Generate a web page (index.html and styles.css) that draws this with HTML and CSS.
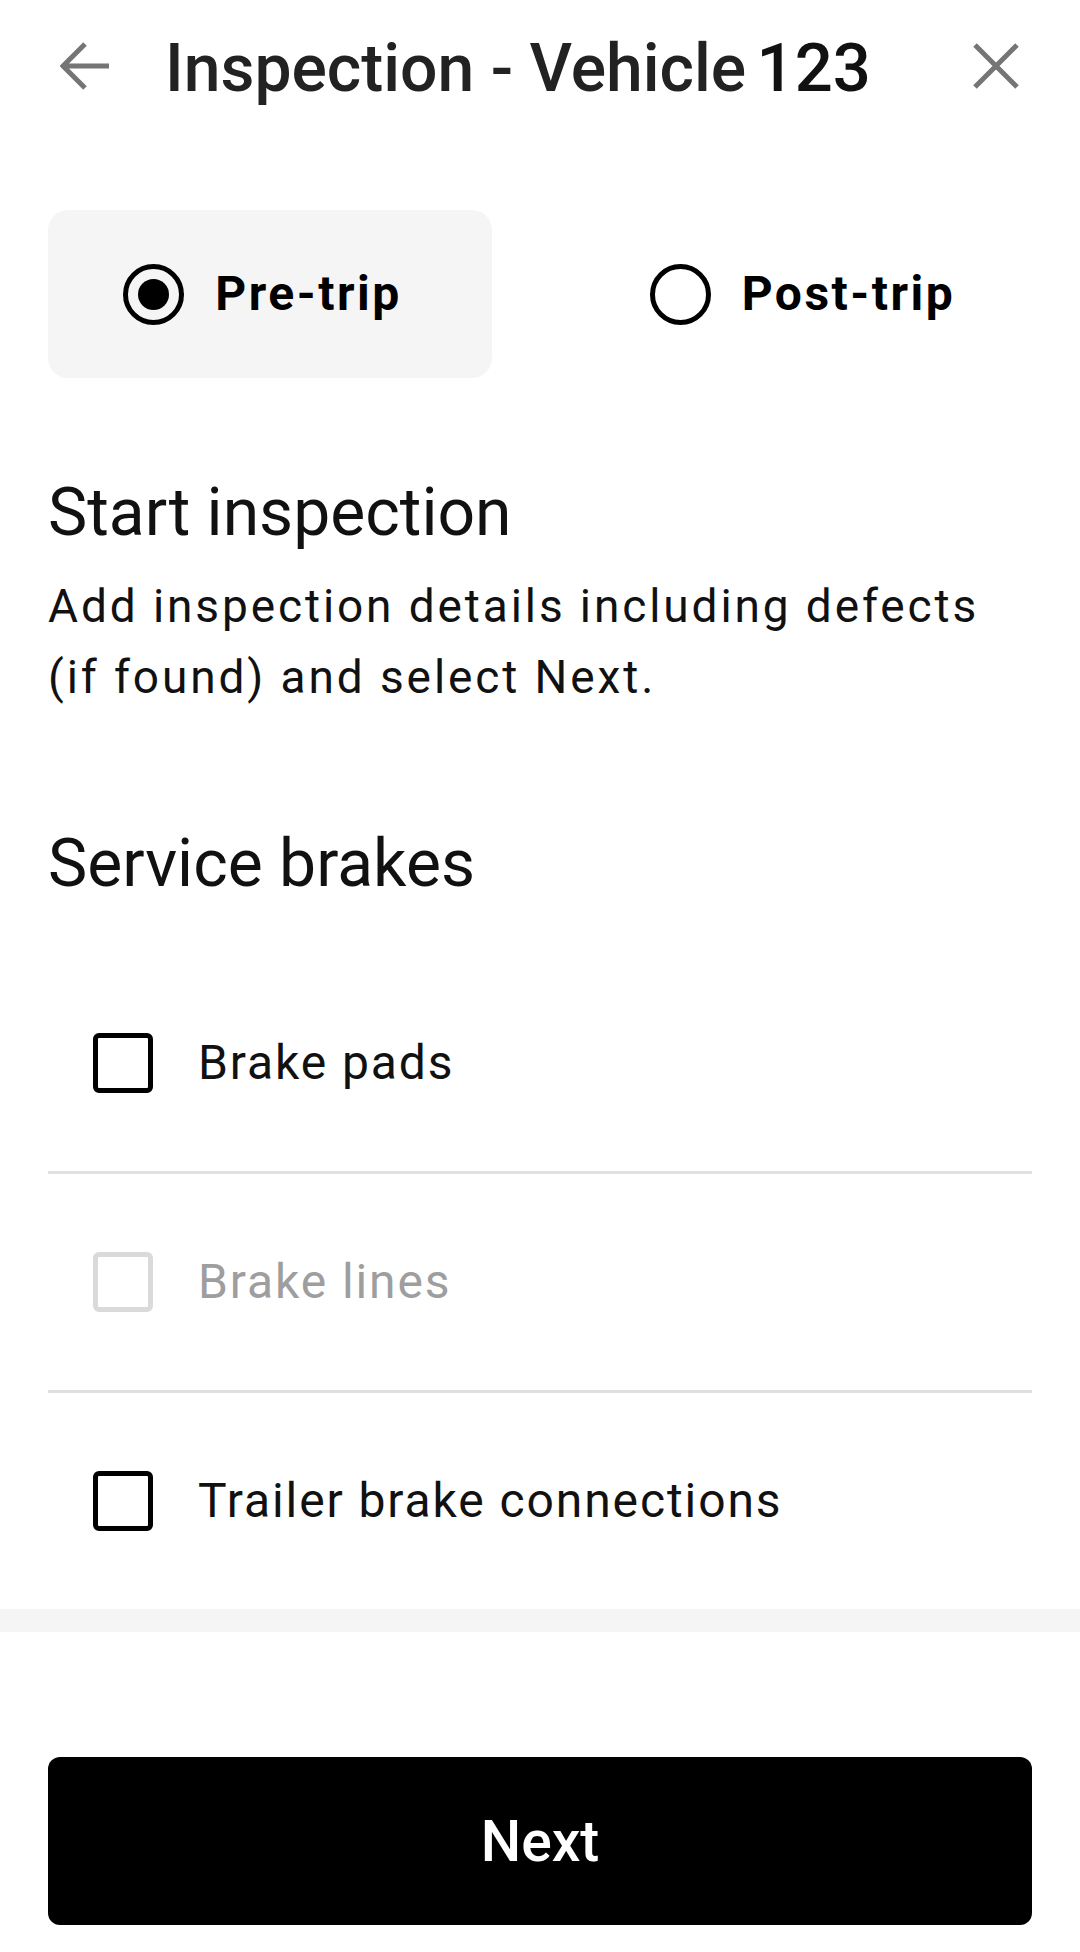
FILE: index.html
```html
<!DOCTYPE html>
<html lang="en">
<head>
<meta charset="utf-8">
<title>Inspection - Vehicle 123</title>
<link rel="stylesheet" href="styles.css">
</head>
<body>
<div class="screen">
  <header class="header">
    <svg class="icon back" width="50" height="50" viewBox="0 0 50 50" aria-label="Back">
      <path d="M49 25H5 M25 3L3 25L25 47" fill="none" stroke="#757575" stroke-width="5"/>
    </svg>
    <h1 class="title">Inspection - Vehicle <span class="num">123</span></h1>
    <svg class="icon close" width="46" height="46" viewBox="0 0 46 46" aria-label="Close">
      <path d="M2 2L44 44M44 2L2 44" fill="none" stroke="#757575" stroke-width="5"/>
    </svg>
  </header>

  <div class="segmented">
    <div class="seg seg-active">
      <span class="radio radio-on"></span>
      <span class="seg-label">Pre-trip</span>
    </div>
    <div class="seg">
      <span class="radio"></span>
      <span class="seg-label">Post-trip</span>
    </div>
  </div>

  <h2 class="heading intro">Start inspection</h2>
  <p class="desc">Add inspection details including defects (if found) and select Next.</p>

  <h2 class="heading section">Service brakes</h2>

  <ul class="checklist">
    <li class="item"><span class="box"></span><span class="item-label">Brake pads</span></li>
    <li class="item disabled"><span class="box"></span><span class="item-label">Brake lines</span></li>
    <li class="item last"><span class="box"></span><span class="item-label">Trailer brake connections</span></li>
  </ul>

  <div class="band"></div>

  <footer class="footer">
    <button class="next">Next</button>
  </footer>
</div>
</body>
</html>
```

FILE: styles.css
```css
* { box-sizing: border-box; }
html, body {
  margin: 0;
  padding: 0;
  background: #ffffff;
}
body {
  font-family: Roboto, "Noto Sans", "Liberation Sans", sans-serif;
  color: #111111;
  width: 1080px;
}
.screen {
  width: 1080px;
  height: 1952px;
  display: flex;
  flex-direction: column;
}

/* Header */
.header {
  height: 132px;
  display: flex;
  align-items: center;
  padding: 0 61px 0 60px;
}
.icon { flex: none; display: block; }
.title {
  flex: 1;
  margin: 4px 0 0 55px;
  font-size: 66px;
  font-weight: 500;
  line-height: 77px;
  color: #222222;
  white-space: nowrap;
}
.title .num {
  color: #111111;
  margin-left: -6px;
  font-size: 67px;
}

/* Segmented control */
.segmented {
  margin: 78px 48px 0;
  display: grid;
  grid-template-columns: 444px 444px;
  justify-content: space-between;
}
.seg {
  height: 168px;
  border-radius: 20px;
  display: flex;
  align-items: center;
  justify-content: center;
  gap: 31px;
  padding-right: 15px;
}
.seg-active { background: #f5f5f5; }
.radio {
  width: 61px;
  height: 61px;
  border: 5px solid #000000;
  border-radius: 50%;
  display: flex;
  align-items: center;
  justify-content: center;
  flex: none;
}
.radio-on::after {
  content: "";
  width: 31px;
  height: 31px;
  border-radius: 50%;
  background: #000000;
}
.seg-label {
  font-size: 48px;
  font-weight: 700;
  letter-spacing: 2.5px;
  color: #000000;
  line-height: 56px;
}

/* Headings and description */
.heading {
  margin: 0 48px;
  font-size: 66px;
  font-weight: 400;
  line-height: 77px;
  color: #111111;
}
.intro { margin-top: 96px; }
.desc {
  margin: 20px 48px 0;
  font-size: 46px;
  line-height: 71px;
  letter-spacing: 2.9px;
  color: #111111;
}
.section { margin-top: 112px; }

/* Checklist */
.checklist {
  list-style: none;
  margin: 53px 48px 0;
  padding: 0;
}
.item {
  height: 219px;
  display: flex;
  align-items: center;
  padding-left: 45px;
  gap: 45px;
  border-bottom: 3px solid #e0e0e0;
}
.item.last {
  border-bottom: none;
  height: 216px;
}
.box {
  width: 60px;
  height: 60px;
  border: 5px solid #000000;
  border-radius: 6px;
  flex: none;
}
.item-label {
  font-size: 48px;
  letter-spacing: 1.9px;
  color: #111111;
  line-height: 56px;
}
.disabled .box { border-color: #dadada; }
.disabled .item-label { color: #9e9e9e; }

/* Band & footer */
.band {
  height: 23px;
  background: #f5f5f5;
}
.footer {
  padding: 125px 48px 26px;
}
.next {
  display: flex;
  align-items: center;
  justify-content: center;
  width: 100%;
  height: 168px;
  border: none;
  border-radius: 12px;
  background: #000000;
  color: #ffffff;
  font-family: Roboto, "Noto Sans", "Liberation Sans", sans-serif;
  font-size: 57px;
  font-weight: 500;
  padding: 0;
}
```
